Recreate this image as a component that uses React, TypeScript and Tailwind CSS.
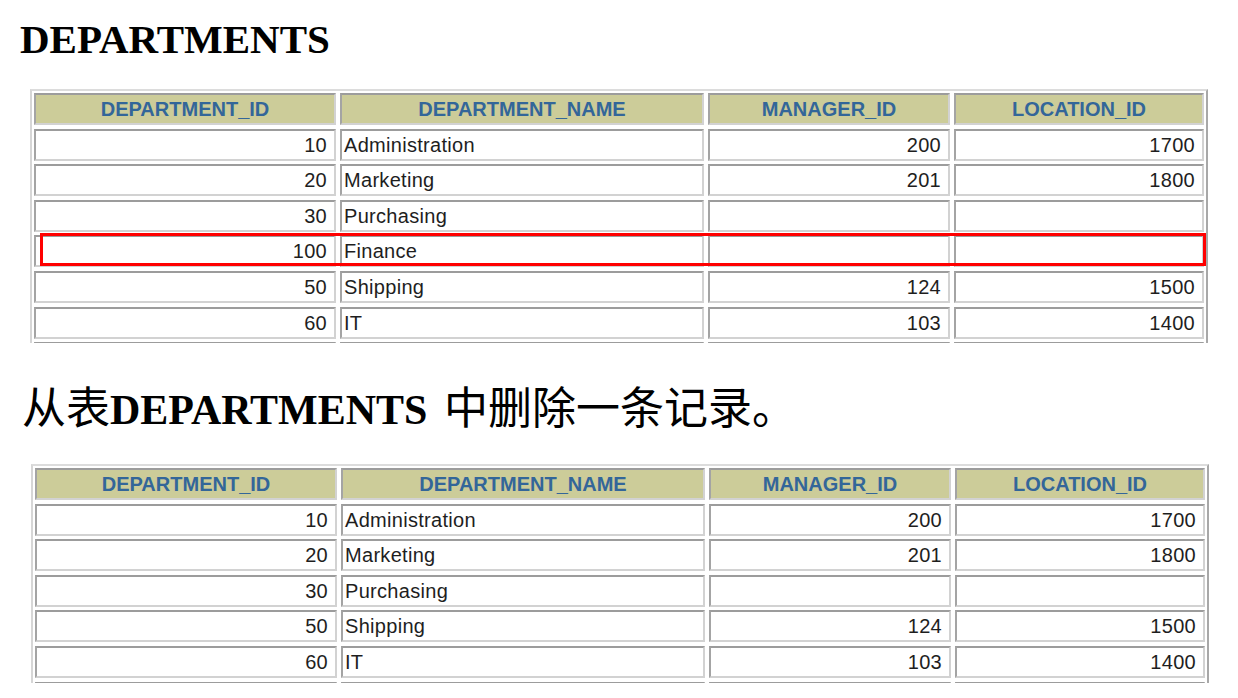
import React from 'react';

type Row = [string, string, string, string];

const head = ['DEPARTMENT_ID', 'DEPARTMENT_NAME', 'MANAGER_ID', 'LOCATION_ID'];

const before: Row[] = [
  ['10', 'Administration', '200', '1700'],
  ['20', 'Marketing', '201', '1800'],
  ['30', 'Purchasing', '', ''],
  ['100', 'Finance', '', ''],
  ['50', 'Shipping', '124', '1500'],
  ['60', 'IT', '103', '1400'],
  ['', '', '', ''],
];

const after: Row[] = [
  ['10', 'Administration', '200', '1700'],
  ['20', 'Marketing', '201', '1800'],
  ['30', 'Purchasing', '', ''],
  ['50', 'Shipping', '124', '1500'],
  ['60', 'IT', '103', '1400'],
  ['', '', '', ''],
];

const cell =
  'h-[32px] border-2 border-t-[#9c9c9c] border-l-[#a4a4a4] border-b-[#d2d2d2] border-r-[#d2d2d2] flex items-center';

function DeptTable({ rows, clip, mark }: { rows: Row[]; clip: string; mark?: boolean }) {
  return (
    <div
      className={`relative ${clip} overflow-hidden border-2 border-b-0 border-t-[#dcdcdc] border-l-[#d6d6d6] border-r-[#a8a8a8] p-[2px] w-[1178px]`}
    >
      <div className="grid grid-cols-[302px_364px_242px_250px] gap-x-[4px] gap-y-[3.6px]">
        {head.map((h) => (
          <div
            key={h}
            className={`${cell} justify-center bg-[#cccc99] text-[#336699] font-bold text-[20px]`}
          >
            {h}
          </div>
        ))}
        {rows.map((r, i) =>
          r.map((v, j) => (
            <div
              key={`${i}-${j}`}
              className={`${cell} bg-white text-[#1e1e1e] text-[20px] tracking-[0.3px] ${
                j === 1 ? 'justify-start pl-[2px]' : 'justify-end pr-[7px]'
              }`}
            >
              {v}
            </div>
          ))
        )}
      </div>
      {/* deleted row highlight */}
      {mark && (
        <div className="absolute left-[8px] top-[142px] w-[1166px] h-[33px] border-[3px] border-[#ff0000]" />
      )}
    </div>
  );
}

export default function App() {
  return (
    <div className="w-[1238px] h-[698px] overflow-hidden bg-white font-['Liberation_Sans',Arial,sans-serif]">
      <h1 className="mt-[16px] ml-[20px] h-[47px] leading-[47px] text-[41px] font-bold text-black font-['Liberation_Serif','Times_New_Roman',serif]">
        DEPARTMENTS
      </h1>
      <div className="mt-[26px] ml-[30px]">
        <DeptTable rows={before} clip="h-[254px]" mark />
      </div>
      <p className="mt-[34px] ml-[22px] h-[56px] leading-[56px] text-[44px] text-black whitespace-nowrap font-['Liberation_Serif','Noto_Sans_CJK_SC',serif]">
        <span className="font-['Noto_Sans_CJK_SC',sans-serif]">从表</span>
        <span className="text-[42px] font-bold">DEPARTMENTS </span>
        <span className="ml-[6px] font-['Noto_Sans_CJK_SC',sans-serif]">中删除一条记录。</span>
      </p>
      <div className="mt-[31px] ml-[31px]">
        <DeptTable rows={after} clip="h-[219px]" />
      </div>
    </div>
  );
}
